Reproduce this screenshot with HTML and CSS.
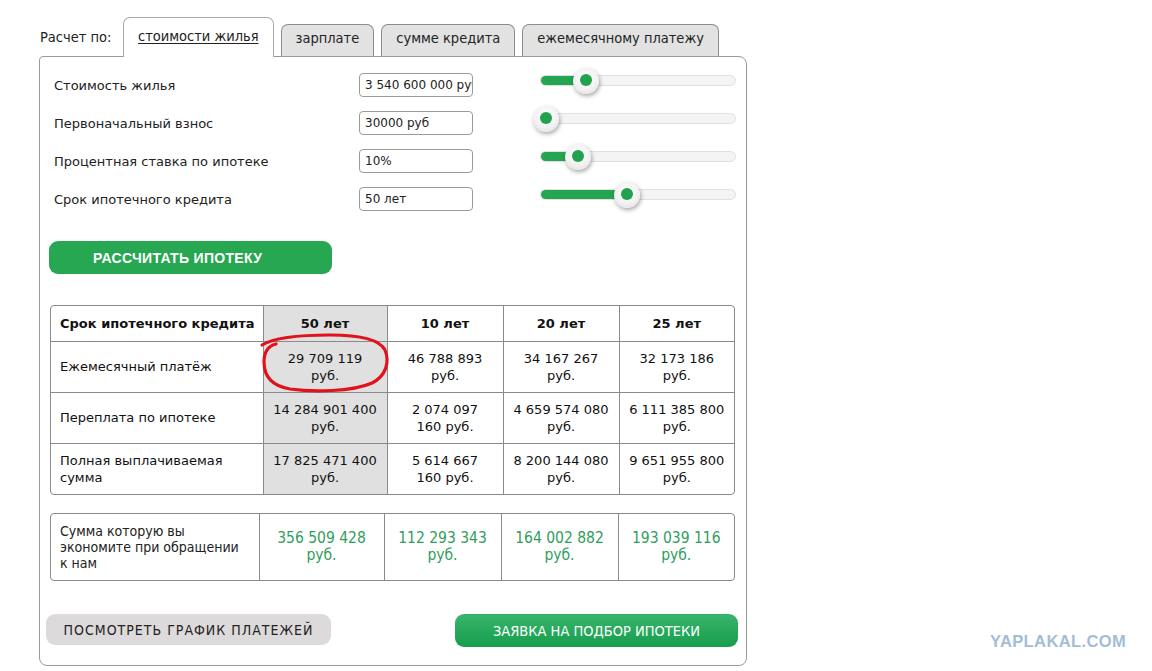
FILE: index.html
```html
<!DOCTYPE html>
<html lang="ru">
<head>
    <meta charset="UTF-8">
    <title>Ипотечный калькулятор</title>
    <link rel="stylesheet" href="styles.css">
</head>
<body>
    <div class="page">
        <div class="tabs">
            <span class="tabs-label">Расчет по:</span>
            <a class="tab active">стоимости жилья</a>
            <a class="tab">зарплате</a>
            <a class="tab">сумме кредита</a>
            <a class="tab">ежемесячному платежу</a>
        </div>

        <div class="panel">
            <div class="field">
                <label>Стоимость жилья</label>
                <input type="text" value="3 540 600 000 руб">
                <div class="slider"><div class="fill" style="width: 45px"></div><span class="knob"></span></div>
            </div>
            <div class="field">
                <label>Первоначальный взнос</label>
                <input type="text" value="30000 руб">
                <div class="slider"><div class="fill" style="width: 5px"></div><span class="knob"></span></div>
            </div>
            <div class="field">
                <label>Процентная ставка по ипотеке</label>
                <input type="text" value="10%">
                <div class="slider"><div class="fill" style="width: 37px"></div><span class="knob"></span></div>
            </div>
            <div class="field">
                <label>Срок ипотечного кредита</label>
                <input type="text" value="50 лет">
                <div class="slider"><div class="fill" style="width: 86px"></div><span class="knob"></span></div>
            </div>

            <button class="btn-calc">РАССЧИТАТЬ ИПОТЕКУ</button>

            <div class="table-wrap">
                <table class="results">
                    <colgroup>
                        <col style="width: 212px"><col style="width: 124px"><col style="width: 116px"><col style="width: 116px"><col>
                    </colgroup>
                    <tr class="head">
                        <th class="name">Срок ипотечного кредита</th>
                        <th class="current">50 лет</th>
                        <th>10 лет</th>
                        <th>20 лет</th>
                        <th>25 лет</th>
                    </tr>
                    <tr>
                        <td class="name">Ежемесячный платёж</td>
                        <td class="current">29 709 119<br>руб.</td>
                        <td>46 788 893<br>руб.</td>
                        <td>34 167 267<br>руб.</td>
                        <td>32 173 186<br>руб.</td>
                    </tr>
                    <tr>
                        <td class="name">Переплата по ипотеке</td>
                        <td class="current">14 284 901 400<br>руб.</td>
                        <td>2 074 097<br>160 руб.</td>
                        <td>4 659 574 080<br>руб.</td>
                        <td>6 111 385 800<br>руб.</td>
                    </tr>
                    <tr>
                        <td class="name">Полная выплачиваемая<br>сумма</td>
                        <td class="current">17 825 471 400<br>руб.</td>
                        <td>5 614 667<br>160 руб.</td>
                        <td>8 200 144 080<br>руб.</td>
                        <td>9 651 955 800<br>руб.</td>
                    </tr>
                </table>
            </div>

            <div class="table-wrap savings-wrap">
                <table class="savings">
                    <colgroup>
                        <col style="width: 208px"><col style="width: 125px"><col style="width: 117px"><col style="width: 117px"><col>
                    </colgroup>
                    <tr>
                        <td class="name">Сумма которую вы<br>экономите при обращении<br>к нам</td>
                        <td>356 509 428<br>руб.</td>
                        <td>112 293 343<br>руб.</td>
                        <td>164 002 882<br>руб.</td>
                        <td>193 039 116<br>руб.</td>
                    </tr>
                </table>
            </div>

            <div class="actions">
                <button class="btn-schedule">ПОСМОТРЕТЬ ГРАФИК ПЛАТЕЖЕЙ</button>
                <button class="btn-request">ЗАЯВКА НА ПОДБОР ИПОТЕКИ</button>
            </div>
        </div>

        <!-- пометка маркером вокруг платежа -->
        <svg class="scribble" width="1152" height="671" viewBox="0 0 1152 671">
            <path d="M262 345 C 275 337, 300 335, 330 335 C 360 335, 380 340, 385 350 C 390 362, 386 376, 372 383 C 352 392, 312 392, 290 389 C 272 386, 264 376, 264 362 C 264 352, 268 346, 276 344"
                  fill="none" stroke="#e1121b" stroke-width="3.2" stroke-linecap="round" stroke-linejoin="round"/>
        </svg>
    </div>

    <div class="watermark">YAPLAKAL.COM</div>
</body>
</html>
```

FILE: styles.css
```css
* {
    margin: 0;
    padding: 0;
    box-sizing: border-box;
}

body {
    font-family: "DejaVu Sans", Verdana, sans-serif;
    font-size: 13px;
    color: #222;
    background: #fff;
}

.page {
    position: relative;
    width: 1152px;
    height: 671px;
    padding: 17px 0 0 39px;
}

/* вкладки */
.tabs {
    display: flex;
    align-items: flex-end;
    gap: 7px;
    height: 39px;
}

.tabs-label {
    font-family: "DejaVu Sans Condensed", "DejaVu Sans", sans-serif;
    font-size: 14.5px;
    color: #222;
    align-self: center;
    padding-left: 1px;
    width: 77px;
}

.tab {
    font-family: "DejaVu Sans Condensed", "DejaVu Sans", sans-serif;
    font-size: 14.5px;
    white-space: nowrap;
    color: #222;
    height: 32px;
    padding: 0 14px 5px 14px;
    display: flex;
    align-items: center;
    background: #e2e2e2;
    border: 1px solid #8c8c8c;
    border-bottom: none;
    border-radius: 7px 7px 0 0;
}

.tab.active {
    position: relative;
    z-index: 2;
    height: 40px;
    margin-bottom: -1px;
    background: #fff;
    border-color: #aaa;
    text-decoration: underline;
    text-underline-offset: 2px;
    padding: 0 14px 3px 14px;
}

/* основной блок */
.panel {
    width: 708px;
    height: 610px;
    border: 1px solid #9a9a9a;
    border-radius: 4px 8px 8px 8px;
    padding-top: 16px;
}

.field {
    display: flex;
    align-items: center;
    height: 24px;
    padding-left: 14px;
    margin-bottom: 14px;
}

.field label {
    width: 305px;
    color: #222;
}

.field input {
    width: 114px;
    height: 24px;
    border: 1px solid #9a9a9a;
    border-radius: 4px;
    padding-left: 5px;
    font-family: "DejaVu Sans", sans-serif;
    font-size: 12px;
    color: #222;
    background: #fff;
}

.slider {
    position: relative;
    width: 196px;
    height: 11px;
    margin-left: 67px;
    margin-top: -9px;
    background: #f4f4f4;
    border: 1px solid #e0e0e0;
    border-radius: 6px;
    display: flex;
    align-items: center;
}

.slider .fill {
    height: 9px;
    background: #25a452;
    border-radius: 5px 0 0 5px;
}

.slider .knob {
    position: relative;
    width: 26px;
    height: 26px;
    margin-left: -13px;
    border-radius: 50%;
    background: radial-gradient(circle at 50% 40%, #fff 0%, #f2f2f2 55%, #d8d8d8 100%);
    box-shadow: 1px 2px 4px rgba(0, 0, 0, 0.35);
    flex-shrink: 0;
}

.slider .knob::after {
    content: "";
    position: absolute;
    left: 7px;
    top: 6px;
    width: 12px;
    height: 12px;
    border-radius: 50%;
    background: #22a14f;
}

.btn-calc {
    display: block;
    margin: 30px 0 0 9px;
    width: 283px;
    height: 33px;
    border: none;
    border-radius: 9px;
    background: #27a752;
    color: #fff;
    font-family: "Liberation Sans", Arial, sans-serif;
    font-weight: bold;
    font-size: 14px;
    letter-spacing: 0.3px;
    text-align: left;
    padding-left: 44px;
}

/* таблицы результатов */
.table-wrap {
    margin: 31px 0 0 10px;
    width: 685px;
    border: 1px solid #8a8a8a;
    border-radius: 4px;
    overflow: hidden;
}

.table-wrap table {
    width: 100%;
    border-collapse: collapse;
    table-layout: fixed;
}

.results td,
.results th {
    border: 1px solid #8a8a8a;
    text-align: center;
    vertical-align: middle;
    line-height: 17px;
    font-size: 13px;
    color: #111;
}

.results tr:first-child > * {
    border-top: none;
}

.results tr:last-child > * {
    border-bottom: none;
}

.results tr > *:first-child {
    border-left: none;
}

.results tr > *:last-child {
    border-right: none;
}

.results .head th {
    height: 35px;
    font-weight: bold;
}

.results tr:nth-child(2) td,
.results tr:nth-child(3) td,
.results tr:nth-child(4) td {
    height: 51px;
}

.results .name {
    text-align: left;
    padding-left: 9px;
}

.results .current {
    background: #e0e0e0;
}

.savings-wrap {
    margin-top: 18px;
}

.savings td {
    height: 66px;
    border-left: 1px solid #8a8a8a;
    text-align: center;
    vertical-align: middle;
    font-family: "DejaVu Sans Condensed", "DejaVu Sans", sans-serif;
    font-size: 15.5px;
    line-height: 17px;
    color: #2f9e5c;
}

.savings td.name {
    border-left: none;
    text-align: left;
    padding-left: 9px;
    font-size: 14px;
    line-height: 16px;
    color: #222;
}

/* кнопки внизу */
.actions {
    display: flex;
    justify-content: space-between;
    align-items: flex-start;
    margin: 33px 8px 0 6px;
}

.btn-schedule {
    width: 285px;
    height: 31px;
    border: none;
    border-radius: 9px;
    background: #dddadb;
    color: #222;
    font-family: "DejaVu Sans Condensed", "DejaVu Sans", sans-serif;
    font-size: 14px;
    letter-spacing: 1px;
}

.btn-request {
    width: 283px;
    height: 33px;
    border: none;
    border-radius: 9px;
    background: linear-gradient(#38b56c, #169d4d);
    color: #fff;
    font-family: "DejaVu Sans Condensed", "DejaVu Sans", sans-serif;
    font-size: 14.5px;
}

.scribble {
    position: absolute;
    left: 0;
    top: 0;
    pointer-events: none;
}

.watermark {
    position: absolute;
    left: 990px;
    top: 632px;
    font-family: "Liberation Sans", Arial, sans-serif;
    font-weight: bold;
    font-size: 16.5px;
    letter-spacing: 0.4px;
    color: #a2bed6;
}
```
